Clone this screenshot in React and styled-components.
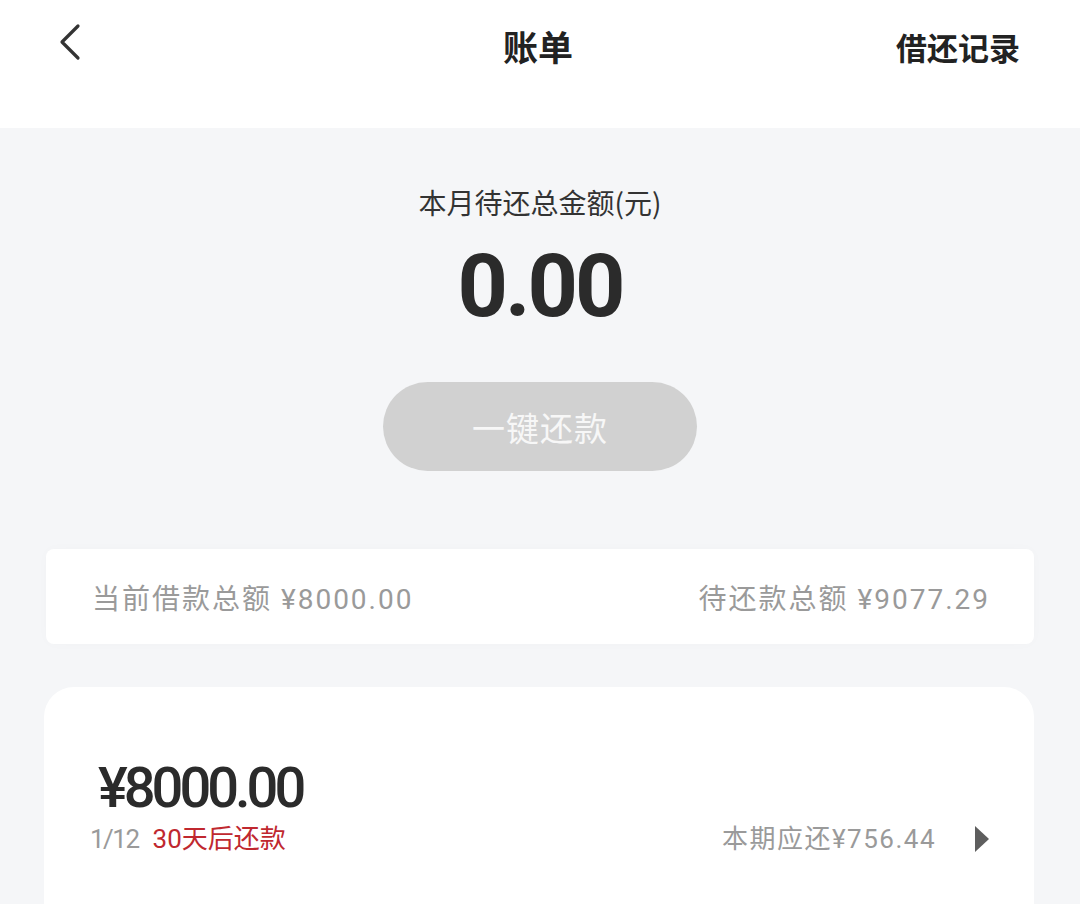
import React from "react";
import styled, { createGlobalStyle } from "styled-components";

const GlobalStyle = createGlobalStyle`
  body {
    margin: 0;
    background: #f5f6f8;
    font-family: "Roboto", "Noto Sans CJK SC", sans-serif;
  }
`;

const App = () => {
  return (
    <Page>
      <GlobalStyle />
      <Header>
        <BackBtn>
          <svg width="28" height="40" viewBox="0 0 28 40" fill="none">
            <path d="M22 4 L6 20 L22 36" stroke="#333" strokeWidth="3.2" strokeLinecap="round" strokeLinejoin="round" />
          </svg>
        </BackBtn>
        <Title>账单</Title>
        <HeaderLink>借还记录</HeaderLink>
      </Header>

      <Hero>
        <HeroLabel>本月待还总金额(元)</HeroLabel>
        <HeroAmount>0.00</HeroAmount>
        <PayButton disabled>一键还款</PayButton>
      </Hero>

      <Body>
        <SummaryCard>
          <SummaryText>当前借款总额 ¥8000.00</SummaryText>
          <SummaryText>待还款总额 ¥9077.29</SummaryText>
        </SummaryCard>

        <LoanCard>
          <LoanAmount>¥8000.00</LoanAmount>
          <LoanRow>
            <LoanMeta>
              <Muted $tight>1/12</Muted>
              <Due>30天后还款</Due>
            </LoanMeta>
            <LoanMeta>
              <Muted>本期应还¥756.44</Muted>
              <Arrow>
                <svg width="16" height="26" viewBox="0 0 16 26">
                  <path d="M1 0 L15 13 L1 26 Z" fill="#5e5e5e" />
                </svg>
              </Arrow>
            </LoanMeta>
          </LoanRow>
        </LoanCard>
      </Body>
    </Page>
  );
};

const Page = styled.div`
  width: 1080px;
  min-height: 904px;
  background: #f5f6f8;
  overflow: hidden;
`;

const Header = styled.div`
  height: 128px;
  background: #fff;
  display: grid;
  grid-template-columns: 1fr auto 1fr;
  align-items: start;
  padding: 0 60px 0 56px;
  box-sizing: border-box;
`;

const BackBtn = styled.div`
  padding-top: 22px;
  display: flex;
`;

const Title = styled.div`
  font-family: "Noto Sans CJK SC", sans-serif;
  font-size: 35px;
  font-weight: 700;
  color: #222;
  line-height: 48px;
  padding-top: 22px;
`;

const HeaderLink = styled.div`
  justify-self: end;
  font-family: "Noto Sans CJK SC", sans-serif;
  font-size: 31px;
  font-weight: 700;
  color: #222;
  line-height: 48px;
  padding-top: 23px;
`;

const Hero = styled.div`
  display: flex;
  flex-direction: column;
  align-items: center;
  padding-top: 54px;
`;

const HeroLabel = styled.div`
  font-family: "Noto Sans CJK SC", sans-serif;
  font-size: 28px;
  color: #333;
  line-height: 40px;
`;

const HeroAmount = styled.div`
  font-family: "Roboto", sans-serif;
  font-size: 88px;
  font-weight: 700;
  letter-spacing: -3px;
  color: #2b2b2b;
  line-height: 100px;
  margin-top: 14px;
`;

const PayButton = styled.button`
  margin-top: 46px;
  width: 314px;
  height: 89px;
  border: none;
  border-radius: 45px;
  background: #d1d1d1;
  color: #f7f7f7;
  font-family: "Noto Sans CJK SC", sans-serif;
  font-size: 33px;
  letter-spacing: 1px;
`;

const Body = styled.div`
  padding: 78px 46px 0 44px;
  display: flex;
  flex-direction: column;
  gap: 43px;
`;

const SummaryCard = styled.div`
  height: 95px;
  background: #fff;
  border-radius: 8px;
  margin-left: 2px;
  display: flex;
  justify-content: space-between;
  align-items: center;
  padding: 0 44px 0 46px;
  box-shadow: 0 0 12px rgba(0, 0, 0, 0.02);
`;

const SummaryText = styled.div`
  font-family: "Roboto", "Noto Sans CJK SC", sans-serif;
  font-size: 28px;
  letter-spacing: 2px;
  color: #9a9a9a;
`;

const LoanCard = styled.div`
  background: #fff;
  border-radius: 30px 30px 0 0;
  padding: 71px 44px 60px 54px;
  min-height: 200px;
`;

const LoanAmount = styled.div`
  font-family: "Roboto", "Noto Sans CJK SC", sans-serif;
  font-size: 56px;
  font-weight: 500;
  letter-spacing: -4px;
  color: #2b2b2b;
  line-height: 60px;
`;

const LoanRow = styled.div`
  display: flex;
  justify-content: space-between;
  align-items: center;
  margin-top: 2px;
`;

const LoanMeta = styled.div`
  display: flex;
  align-items: center;
  gap: 14px;
`;

const Muted = styled.span`
  font-family: "Roboto", "Noto Sans CJK SC", sans-serif;
  font-size: 26px;
  line-height: 38px;
  color: #9a9a9a;
  letter-spacing: ${(p) => (p.$tight ? "-1.5px" : "1.5px")};
  margin-left: ${(p) => (p.$tight ? "-8px" : "0")};
`;

const Due = styled.span`
  font-family: "Roboto", "Noto Sans CJK SC", sans-serif;
  font-size: 26px;
  line-height: 38px;
  color: #c0282f;
`;

const Arrow = styled.span`
  display: flex;
  margin-left: 24px;
`;

export default App;
